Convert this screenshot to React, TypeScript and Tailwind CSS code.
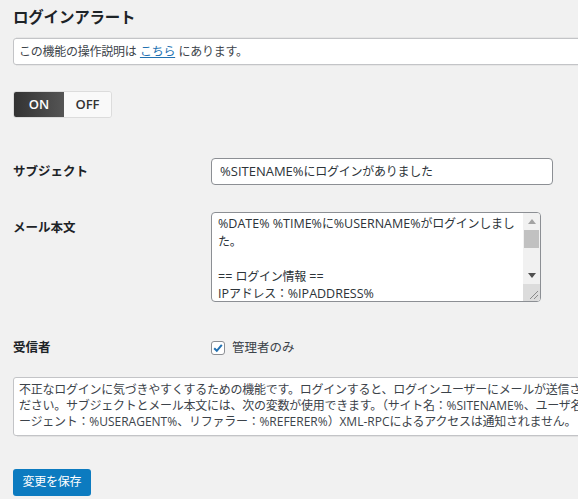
import React from "react";

const font = "font-['Open_Sans','Noto_Sans_CJK_JP',sans-serif]";
const CJK = /([\u3000-\u30ff\u3400-\u9fff\uff00-\uffef]+)/;

function T({ s, c = "text-[12px] tracking-[-0.25px]" }: { s: string; c?: string }) {
  return (
    <>
      {s.split(CJK).map((p, i) =>
        i % 2 ? (
          <span key={i} className={c}>
            {p}
          </span>
        ) : (
          <React.Fragment key={i}>{p}</React.Fragment>
        )
      )}
    </>
  );
}

export default function App() {
  const mail = [
    "%DATE% %TIME%に%USERNAME%がログインしまし",
    "た。",
    "",
    "== ログイン情報 ==",
    "IPアドレス：%IPADDRESS%",
  ];
  const desc = [
    "不正なログインに気づきやすくするための機能です。ログインすると、ログインユーザーにメールが送信されますのでご確認く",
    "ださい。サブジェクトとメール本文には、次の変数が使用できます。（サイト名：%SITENAME%、ユーザ名：%USERNAME%、ユーザーエ",
    "ージェント：%USERAGENT%、リファラー：%REFERER%）XML-RPCによるアクセスは通知されません。",
  ];
  return (
    <div className={`min-h-[499px] w-full overflow-hidden bg-[#f1f1f1] text-[13px] text-[#3c434a] ${font}`}>
      <div className="w-[720px] pl-[13px]">
        <h3 className="h-[27px] pt-[7px] text-[17px] font-bold leading-[20px] text-[#1d2327]">
          <T s="ログインアラート" c="text-[15.5px] tracking-[-0.2px]" />
        </h3>

        <div className="mt-[11px] h-[27px] whitespace-nowrap rounded-l-[3px] border border-[#c3c4c7] bg-white pl-[5px] leading-[25px] text-[#3c434a] shadow-[0_-4px_0_-3px_#e6e6e6,0_4px_0_-3px_#e6e6e6]">
          <T s="この機能の操作説明は " />
          <a className="text-[#2271b1] underline">
            <T s="こちら" />
          </a>
          <T s=" にあります。" />
        </div>

        <div className="mt-[26px] flex h-[27px] w-[99px] overflow-hidden rounded-[3px] border border-[#dcdcdc] font-semibold">
          <div className="flex w-[50px] items-center justify-center bg-gradient-to-r from-[#333333] to-[#555555] text-white">ON</div>
          <div className="flex flex-1 items-center justify-center bg-[#f9f9f9] text-[#333]">OFF</div>
        </div>

        <div className="mt-[40px] flex items-center">
          <div className="w-[198px] font-bold text-[#1d2327]">
            <T s="サブジェクト" c="text-[12.5px]" />
          </div>
          <div className="flex h-[27px] w-[342px] items-center rounded-[4px] border border-[#8c8f94] bg-white px-[8px] text-[#2c3338]">
            <T s="%SITENAME%にログインがありました" />
          </div>
        </div>

        <div className="mt-[27px] flex items-start">
          <div className="w-[198px] pt-[6px] font-bold text-[#1d2327]">
            <T s="メール本文" c="text-[12.5px]" />
          </div>
          <div className="flex h-[90px] w-[330px] overflow-hidden rounded-[4px] border border-[#8c8f94] bg-white">
            <div className="flex-1 overflow-hidden whitespace-pre pl-[6px] pt-[2px] text-[12.5px] text-[#2c3338]">
              {mail.map((l, i) => (
                <div key={i} className="h-[17.5px] leading-[17.5px]">
                  <T s={l} />
                </div>
              ))}
            </div>
            <div className="flex w-[17px] flex-col bg-[#f1f1f1]">
              <div className="flex h-[17px] items-center justify-center">
                <svg width="8" height="5" viewBox="0 0 8 5"><path d="M0 5 L4 0 L8 5 Z" fill="#a3a3a3" /></svg>
              </div>
              <div className="mx-[1px] h-[18px] bg-[#c1c1c1]" />
              <div className="flex-1" />
              <div className="flex h-[17px] items-center justify-center">
                <svg width="8" height="5" viewBox="0 0 8 5"><path d="M0 0 L4 5 L8 0 Z" fill="#505050" /></svg>
              </div>
              <div className="flex h-[17px] items-end justify-end bg-[#dcdcdc] p-[2px]">
                <svg width="9" height="9" viewBox="0 0 9 9">
                  <path d="M1 9 L9 1 M5 9 L9 5" stroke="#8a8a8a" strokeWidth="1" />
                </svg>
              </div>
            </div>
          </div>
        </div>

        <div className="mt-[36px] flex items-center">
          <div className="w-[198px] font-bold text-[#1d2327]">
            <T s="受信者" c="text-[12.5px]" />
          </div>
          <div className="flex items-center gap-[7px]">
            <span className="flex h-[14px] w-[14px] items-center justify-center rounded-[3px] border border-[#8c8f94] bg-white">
              <svg width="12" height="12" viewBox="0 0 12 12">
                <path d="M2.2 6.2 L4.8 8.8 L9.8 2.8" fill="none" stroke="#2271b1" strokeWidth="2" />
              </svg>
            </span>
            <span className="text-[#3c434a]">
              <T s="管理者のみ" c="text-[12.5px]" />
            </span>
          </div>
        </div>

        <div className="mt-[19px] rounded-l-[3px] border border-[#c3c4c7] bg-white pb-[5px] pl-[5px] pt-[4px] whitespace-nowrap text-[12px] text-[#3c434a] shadow-[0_5px_0_-4px_#e2e2e2]">
          {desc.map((l, i) => (
            <div key={i} className="h-[16px] leading-[16px]">
              <T s={l} />
            </div>
          ))}
        </div>

        <button className="mt-[33px] flex h-[27px] w-[78px] items-center justify-center rounded-[3px] bg-[#0c7bc0] text-white">
          <T s="変更を保存" />
        </button>
      </div>
    </div>
  );
}
